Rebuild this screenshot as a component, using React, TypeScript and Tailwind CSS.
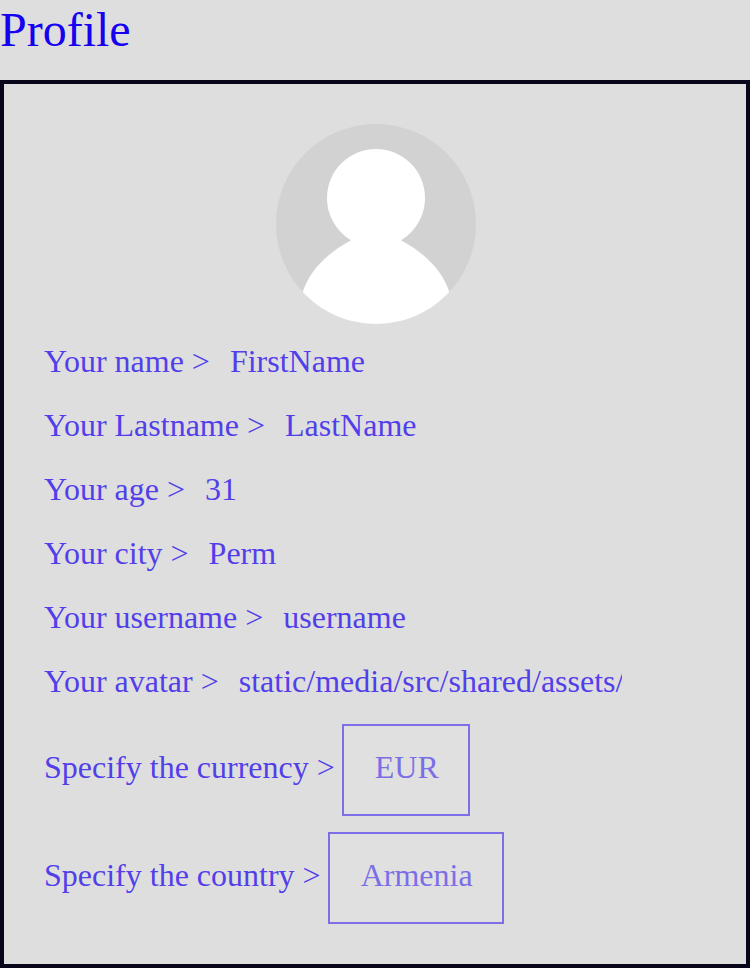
import React from "react";

const fields: { label: string; value: string }[] = [
  { label: "Your name", value: "FirstName" },
  { label: "Your Lastname", value: "LastName" },
  { label: "Your age", value: "31" },
  { label: "Your city", value: "Perm" },
  { label: "Your username", value: "username" },
  { label: "Your avatar", value: "static/media/src/shared/assets/tests/storybook.jpg" },
];

function Avatar() {
  return (
    <svg viewBox="0 0 200 200" className="ml-[1px] size-[200px]">
      <defs>
        <clipPath id="avatar-circle">
          <circle cx="100" cy="100" r="100" />
        </clipPath>
      </defs>
      <g clipPath="url(#avatar-circle)">
        <rect width="200" height="200" fill="#d2d2d2" />
        <circle cx="100" cy="74" r="49" fill="#fff" />
        <path d="M75.5 116C51 129 33 147 26 170L26 200H174V170C167 147 149 129 124.500 116Z" fill="#fff" />
      </g>
    </svg>
  );
}

function Field({ label, value }: { label: string; value: string }) {
  return (
    <div className="flex h-8 items-center">
      <span className="mr-5 whitespace-nowrap">{label} &gt;</span>
      <input
        readOnly
        defaultValue={value}
        className="w-[383px] bg-transparent p-0 outline-none"
      />
    </div>
  );
}

function Picker({ label, value, width }: { label: string; value: string; width: string }) {
  return (
    <div className="flex h-[92px] items-center">
      <span className="mr-[7px] -translate-y-[3px] whitespace-nowrap">{label} &gt;</span>
      <button className={`${width} h-[92px] border-2 border-[#523fea] bg-[#e1e1e1] pb-[6px] pl-[2px] text-center opacity-70`}>
        {value}
      </button>
    </div>
  );
}

export default function App() {
  return (
    <main className="flex h-[968px] w-[750px] flex-col overflow-hidden bg-[#dedede] font-['Liberation_Serif',serif]">
      <h1 className="h-20 text-[48px] leading-[60px] text-[#1600f0]">Profile</h1>
      <section className="flex flex-1 flex-col border-4 border-[#07061a] px-10 pt-10 text-[32px] leading-8 text-[#523fea]">
        <div className="flex justify-center">
          <Avatar />
        </div>
        <div className="mt-[21px] flex flex-col gap-8">
          {fields.map((field) => (
            <Field key={field.label} {...field} />
          ))}
        </div>
        <div className="mt-[27px] flex flex-col gap-4">
          <Picker label="Specify the currency" value="EUR" width="w-32" />
          <Picker label="Specify the country" value="Armenia" width="w-44" />
        </div>
      </section>
    </main>
  );
}
